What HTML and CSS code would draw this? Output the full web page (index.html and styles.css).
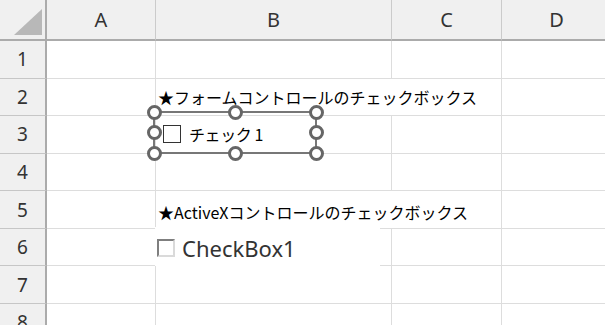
FILE: index.html
```html
<!DOCTYPE html>
<html>
  <head>
    <meta charset="utf-8">
    <title>Sheet1</title>
    <link rel="stylesheet" href="styles.css">
  </head>
  <body>
    <div class="sheet">
      <div class="corner">
        <svg width="45" height="39" viewBox="0 0 45 39"><polygon points="14,35 42,35 42,9" fill="#b8b8b8"/></svg>
      </div>
      <div class="col-head">A</div>
      <div class="col-head">B</div>
      <div class="col-head">C</div>
      <div class="col-head">D</div>

      <div class="row-head">1</div>
      <div class="cell"></div><div class="cell"></div><div class="cell"></div><div class="cell"></div>

      <div class="row-head">2</div>
      <div class="cell"></div>
      <div class="cell wide">★フォームコントロールのチェックボックス</div>
      <div class="cell"></div>

      <div class="row-head">3</div>
      <div class="cell"></div><div class="cell"></div><div class="cell"></div><div class="cell"></div>

      <div class="row-head">4</div>
      <div class="cell"></div><div class="cell"></div><div class="cell"></div><div class="cell"></div>

      <div class="row-head">5</div>
      <div class="cell"></div>
      <div class="cell wide low">★ActiveXコントロールのチェックボックス</div>
      <div class="cell"></div>

      <div class="row-head">6</div>
      <div class="cell"></div><div class="cell"></div><div class="cell"></div><div class="cell"></div>

      <div class="row-head">7</div>
      <div class="cell"></div><div class="cell"></div><div class="cell"></div><div class="cell"></div>

      <div class="row-head">8</div>
      <div class="cell"></div><div class="cell"></div><div class="cell"></div><div class="cell"></div>

      <!-- form control, selected -->
      <div class="form-ctrl">
        <div class="frame">
          <span class="fc-box"></span>
          <span class="fc-label">チェック 1</span>
        </div>
        <span class="handle h-tl"></span>
        <span class="handle h-tm"></span>
        <span class="handle h-tr"></span>
        <span class="handle h-ml"></span>
        <span class="handle h-mr"></span>
        <span class="handle h-bl"></span>
        <span class="handle h-bm"></span>
        <span class="handle h-br"></span>
      </div>

      <!-- ActiveX control -->
      <div class="activex">
        <span class="ax-box"></span>
        <span class="ax-label">CheckBox1</span>
      </div>
    </div>
  </body>
</html>
```

FILE: styles.css
```css
body {
  margin: 0;
  background: #fff;
  font-family: "Noto Sans", sans-serif;
}
.sheet {
  position: relative;
  width: 605px;
  height: 325px;
  overflow: hidden;
  display: grid;
  grid-template-columns: 47px 109px 236px 110px 110px;
  grid-template-rows: 41px repeat(8, 37.57px);
}
.sheet > div {
  box-sizing: border-box;
}
.corner {
  background: #f0f0f0;
  border-right: 2px solid #ababab;
  border-bottom: 2px solid #ababab;
}
.corner svg {
  display: block;
}
.col-head {
  background: #f0f0f0;
  border-right: 1px solid #cbcbcb;
  border-bottom: 2px solid #ababab;
  display: flex;
  align-items: center;
  justify-content: center;
  font-size: 20px;
  color: #333;
}
.row-head {
  background: #f0f0f0;
  border-right: 2px solid #ababab;
  border-bottom: 1px solid #c6c6c6;
  display: flex;
  align-items: center;
  justify-content: center;
  font-size: 19px;
  color: #333;
}
.cell {
  border-right: 1px solid #dddddd;
  border-bottom: 1px solid #dddddd;
}
.cell.wide {
  grid-column: span 2;
  display: flex;
  align-items: center;
  padding-left: 2px;
  font-family: "Noto Sans CJK JP", sans-serif;
  font-size: 16px;
  color: #000;
  white-space: nowrap;
}
.cell.low {
  padding-top: 5px;
}

.form-ctrl {
  position: absolute;
  left: 147px;
  top: 105px;
  width: 176px;
  padding: 6px;
  box-sizing: border-box;
}
.frame {
  height: 43px;
  box-sizing: border-box;
  border: 2px solid #777;
  display: flex;
  align-items: center;
  padding: 2px 0 0 8px;
  gap: 8px;
  font-family: "Noto Sans CJK JP", sans-serif;
  font-size: 16px;
  letter-spacing: -0.4px;
  color: #000;
}
.fc-box {
  width: 18px;
  height: 18px;
  box-sizing: border-box;
  border: 1.5px solid #333;
  background: #fff;
}
.handle {
  position: absolute;
  width: 15px;
  height: 15px;
  box-sizing: border-box;
  border: 3px solid #666;
  border-radius: 50%;
  background: #fff;
}
.h-tl { left: -0.5px; top: -0.5px; }
.h-tm { left: 80.5px; top: -0.5px; }
.h-tr { left: 161.5px; top: -0.5px; }
.h-ml { left: -0.5px; top: 20px; }
.h-mr { left: 161.5px; top: 20px; }
.h-bl { left: -0.5px; top: 40.5px; }
.h-bm { left: 80.5px; top: 40.5px; }
.h-br { left: 161.5px; top: 40.5px; }

.activex {
  position: absolute;
  left: 155px;
  top: 227px;
  width: 225px;
  height: 39px;
  background: #fff;
  display: flex;
  align-items: center;
  padding: 2px 0 0 2px;
  box-sizing: border-box;
  gap: 7px;
}
.ax-box {
  width: 18px;
  height: 18px;
  box-sizing: border-box;
  border-top: 2px solid #7f7f7f;
  border-left: 2px solid #7f7f7f;
  border-right: 2px solid #dadada;
  border-bottom: 2px solid #dadada;
  background: #fff;
}
.ax-label {
  font-size: 22px;
  color: #333;
  line-height: 1;
}
```
